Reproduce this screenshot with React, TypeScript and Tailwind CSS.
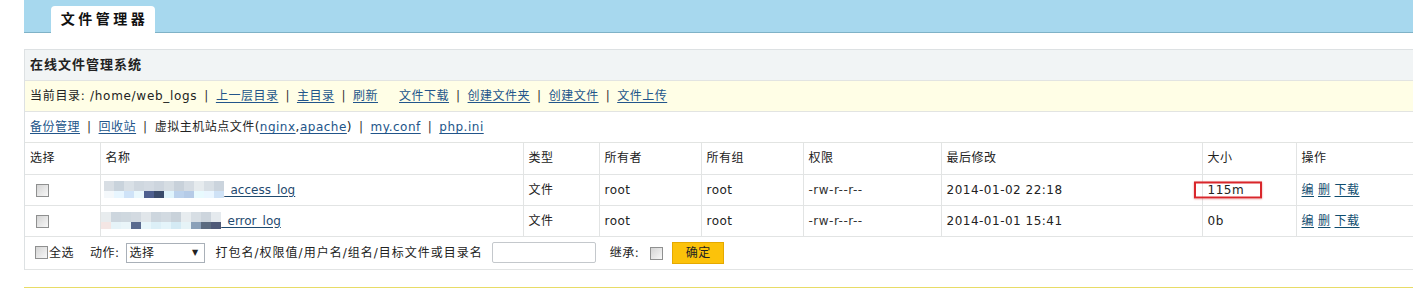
import React from "react";

const font = { fontFamily: '"DejaVu Sans", "Noto Sans CJK SC", sans-serif' };

const mosaics = [
  {
    top: ["#d8dee4", "#c9d3dc", "#d9e0e6", "#cfd7df", "#d3dae2", "#cdd5de", "#d6dde3", "#c8d1da", "#d5dce3", "#e6ebee", "#d8dfe5", "#cbd4dd"],
    bottom: ["#f4f8fb", "#e8f6ff", "#cfe3f8", "#eaf8fd", "#4e5f8f", "#3a4b6b", "#e0f4fc", "#bcd2ec", "#b5cbe7", "#e8fafe", "#eaf6ff", "#cfe2f6"],
  },
  {
    top: ["#e8ecee", "#cdd6de", "#cfd8df", "#d3dae1", "#e1e6ea", "#cdd6de", "#d2dae1", "#c9d2da", "#e7ecef", "#d7dee4", "#cdd5dd", "#e5eaee"],
    bottom: ["#f4e6e4", "#e6f3f8", "#eaf5f9", "#5a6a8e", "#e8f6fb", "#dceff7", "#e4f4fa", "#d4eaf4", "#e6f3f7", "#8aa0b8", "#5b6b80", "#4f5a78"],
  },
];

const files = [
  { name: "_access_log", mosaic: 0, shift: "ml-[3px]", date: "2014-01-02 22:18", size: "115m", marked: true },
  { name: "_error_log", mosaic: 1, shift: "ml-0", date: "2014-01-01 15:41", size: "0b", marked: false },
];

function Box() {
  return (
    <span className="inline-block h-[13px] w-[13px] border border-[#8f9090] bg-gradient-to-br from-[#d4d4d4] to-[#f8f8f8] align-middle" />
  );
}

function A({ children }: { children: React.ReactNode }) {
  return <a className="cursor-pointer text-[#22558a] underline underline-offset-2">{children}</a>;
}

function Sep() {
  return <span className="mx-[7px] text-[#333]">|</span>;
}

function Mosaic({ idx }: { idx: number }) {
  const m = mosaics[idx];
  return (
    <span className="inline-flex flex-col align-middle">
      <span className="flex">
        {m.top.map((c, i) => (
          <span key={i} className="h-[10px] w-[10px]" style={{ background: c }} />
        ))}
      </span>
      <span className="flex">
        {m.bottom.map((c, i) => (
          <span key={i} className="h-[7px] w-[10px]" style={{ background: c }} />
        ))}
      </span>
    </span>
  );
}

export default function App() {
  return (
    <div className="h-[288px] w-[1413px] overflow-hidden bg-white text-[12px] tracking-[0.5px] text-[#222]" style={font}>
      <div className="ml-[24px]">
        {/* title bar */}
        <div className="flex h-[33px] border-b border-[#7fb2c7] bg-[#a7d8ee] pl-[27px] pt-[6px]">
          <div className="flex h-[27px] w-[104px] items-center justify-center rounded-t-[4px] bg-white pb-[1px] pl-[3px] text-[14px] font-bold tracking-[3.5px] text-[#111]">
            文件管理器
          </div>
        </div>

        <div className="mt-[16px] border-l border-t border-[#dde1e3]">
          <div className="flex h-[31px] items-center border-b border-[#e2e4e2] bg-[#f1f4f5] pl-[5px] text-[13px] font-bold tracking-[1px]">
            在线文件管理系统
          </div>
          <div className="flex h-[31px] items-center border-b border-[#e2e4e2] bg-[#fffee6] pl-[5px]">
            <span className="tracking-[0.7px]">当前目录: /home/web_logs</span>
            <Sep />
            <A>上一层目录</A>
            <Sep />
            <A>主目录</A>
            <Sep />
            <A>刷新</A>
            <span className="w-[21px]" />
            <A>文件下载</A>
            <Sep />
            <A>创建文件夹</A>
            <Sep />
            <A>创建文件</A>
            <Sep />
            <A>文件上传</A>
          </div>
          <div className="flex h-[31px] items-center border-b border-[#e2e4e2] pl-[5px]">
            <A>备份管理</A>
            <Sep />
            <A>回收站</A>
            <Sep />
            <span>虚拟主机站点文件(</span>
            <A>nginx</A>
            <span>,</span>
            <A>apache</A>
            <span>)</span>
            <Sep />
            <A>my.conf</A>
            <Sep />
            <A>php.ini</A>
          </div>

          <table className="w-full table-fixed border-collapse">
            <colgroup>
              <col className="w-[75px]" />
              <col className="w-[423px]" />
              <col className="w-[76px]" />
              <col className="w-[102px]" />
              <col className="w-[102px]" />
              <col className="w-[138px]" />
              <col className="w-[261px]" />
              <col className="w-[94px]" />
              <col />
            </colgroup>
            <thead>
              <tr className="h-[31px] border-b border-[#e2e4e4] text-left">
                {["选择", "名称", "类型", "所有者", "所有组", "权限", "最后修改", "大小", "操作"].map((h, i) => (
                  <th key={h} className={`pl-[5px] font-normal ${i > 0 ? "border-l border-[#e2e4e4]" : ""}`}>
                    {h}
                  </th>
                ))}
              </tr>
            </thead>
            <tbody>
              {files.map((f) => (
                <tr key={f.name} className="h-[31px] border-b border-[#e2e4e4]">
                  <td className="pl-[11px]">
                    <Box />
                  </td>
                  <td className="border-l border-[#e2e4e4]">
                    <span className={`flex items-center ${f.shift}`}>
                      <Mosaic idx={f.mosaic} />
                      <a className="ml-[1px] cursor-pointer tracking-normal text-[#1f4a6f] underline underline-offset-2">
                        {f.name}
                      </a>
                    </span>
                  </td>
                  <td className="border-l border-[#e2e4e4] pl-[5px]">文件</td>
                  <td className="border-l border-[#e2e4e4] pl-[5px]">root</td>
                  <td className="border-l border-[#e2e4e4] pl-[5px]">root</td>
                  <td className="border-l border-[#e2e4e4] pl-[5px] text-[#333]">-rw-r--r--</td>
                  <td className="border-l border-[#e2e4e4] pl-[5px]">{f.date}</td>
                  <td className="relative border-l border-[#e2e4e4] pl-[5px]">
                    {f.size}
                    {f.marked && (
                      <span className="absolute left-[-9px] top-1/2 h-[17px] w-[68px] -translate-y-1/2 border-2 border-[#d9262b] shadow-[0_0_2px_rgba(200,0,0,0.4)]" />
                    )}
                  </td>
                  <td className="border-l border-[#e2e4e4] pl-[5px]">
                    <span className="space-x-[4px] text-[#0f4c6e]">
                      <a className="cursor-pointer underline underline-offset-2">编</a>
                      <a className="cursor-pointer underline underline-offset-2">删</a>
                      <a className="cursor-pointer underline underline-offset-2">下载</a>
                    </span>
                  </td>
                </tr>
              ))}
            </tbody>
          </table>

          <div className="flex h-[33px] items-center border-b border-[#e2e4e4] pl-[10px]">
            <Box />
            <span className="ml-[1px]">全选</span>
            <span className="ml-[16px]">动作:</span>
            <span className="ml-[6px] flex h-[20px] w-[79px] items-center justify-between border border-[#a9b0b8] bg-white pl-[3px] pr-[5px]">
              <span>选择</span>
              <span className="text-[8px] text-[#222]">▼</span>
            </span>
            <span className="ml-[11px] tracking-[1px]">打包名/权限值/用户名/组名/目标文件或目录名</span>
            <span className="ml-[9px] h-[21px] w-[104px] rounded-[2px] border border-[#c4c8cc] bg-white" />
            <span className="ml-[14px]">继承:</span>
            <span className="ml-[11px]">
              <Box />
            </span>
            <button className="ml-[9px] flex h-[22px] w-[52px] items-center justify-center border border-[#e5a900] bg-[#fcc20a] text-[12px] text-[#222]">
              确定
            </button>
          </div>
        </div>

        <div className="mt-[17px] h-[10px] border-t border-[#e8dc66] bg-[#fffde6]" />
      </div>
    </div>
  );
}
